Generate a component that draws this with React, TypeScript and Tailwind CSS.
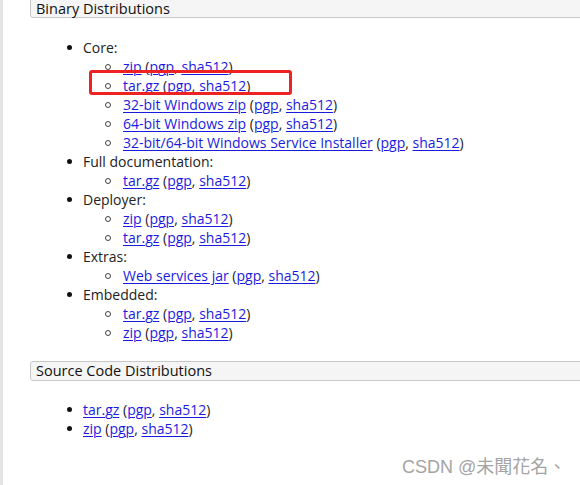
import React from "react";

const L = ({ children }: { children: React.ReactNode }) => (
  <a className="text-[#1b1be0] underline decoration-1 underline-offset-[2px]">{children}</a>
);

const Sigs = () => (
  <>
    {" "}(<L>pgp</L>, <L>sha512</L>)
  </>
);

const Top = ({ children }: { children: React.ReactNode }) => (
  <div className="flex items-center h-[19px] pl-[37px]">
    <span className="w-[5px] h-[5px] rounded-full bg-[#111] shrink-0" />
    <span className="ml-[11px] whitespace-nowrap">{children}</span>
  </div>
);

const Sub = ({ children }: { children: React.ReactNode }) => (
  <div className="flex items-center h-[19px] pl-[75px]">
    <span className="w-[6px] h-[6px] rounded-full border border-[#444] shrink-0" />
    <span className="ml-[12px] whitespace-nowrap">{children}</span>
  </div>
);

export default function App() {
  return (
    <div
      className="relative w-[580px] h-[485px] overflow-hidden bg-white flex text-[14px] text-[#222]"
      style={{ fontFamily: '"Open Sans", "Noto Sans", sans-serif' }}
    >
      <div className="w-[3px] h-full bg-[#e4e4e4] shrink-0" />
      <div className="flex-1 pl-[27px] flex flex-col">
        <div className="mt-[-2px] mr-[-10px] h-[20px] border border-[#c8c8c8] rounded-[3px] bg-[#f5f5f5] flex items-center pl-[5px] pt-[2px] leading-none text-[14.5px] text-[#111]">
          Binary Distributions
        </div>
        <div className="mt-[20px] leading-[19px]">
          <Top>Core:</Top>
          <Sub><L>zip</L><Sigs /></Sub>
          <Sub><L>tar.gz</L><Sigs /></Sub>
          <Sub><L>32-bit Windows zip</L><Sigs /></Sub>
          <Sub><L>64-bit Windows zip</L><Sigs /></Sub>
          <Sub><L>32-bit/64-bit Windows Service Installer</L><Sigs /></Sub>
          <Top>Full documentation:</Top>
          <Sub><L>tar.gz</L><Sigs /></Sub>
          <Top>Deployer:</Top>
          <Sub><L>zip</L><Sigs /></Sub>
          <Sub><L>tar.gz</L><Sigs /></Sub>
          <Top>Extras:</Top>
          <Sub><L>Web services jar</L><Sigs /></Sub>
          <Top>Embedded:</Top>
          <Sub><L>tar.gz</L><Sigs /></Sub>
          <Sub><L>zip</L><Sigs /></Sub>
        </div>
        <div className="mt-[19px] mr-[-10px] h-[20px] border border-[#c8c8c8] rounded-[3px] bg-[#f5f5f5] flex items-center pl-[5px] leading-none text-[14.5px] text-[#111]">
          Source Code Distributions
        </div>
        <div className="mt-[19px] leading-[19px]">
          <Top><L>tar.gz</L><Sigs /></Top>
          <Top><L>zip</L><Sigs /></Top>
        </div>
      </div>
      <div className="absolute left-[89px] top-[70px] w-[203px] h-[25px] border-[3px] border-[#ee2222] rounded-[3px]" />
      <div
        className="absolute left-[402px] top-[458px] text-[18px] leading-[18px] text-[#a4a4a4] whitespace-nowrap"
        style={{
          fontFamily: '"Liberation Sans", "Noto Sans CJK TC", sans-serif',
          textShadow: "0 0 1px #fff, 0 0 1px #fff",
        }}
      >
        CSDN @未聞花名、
      </div>
    </div>
  );
}
